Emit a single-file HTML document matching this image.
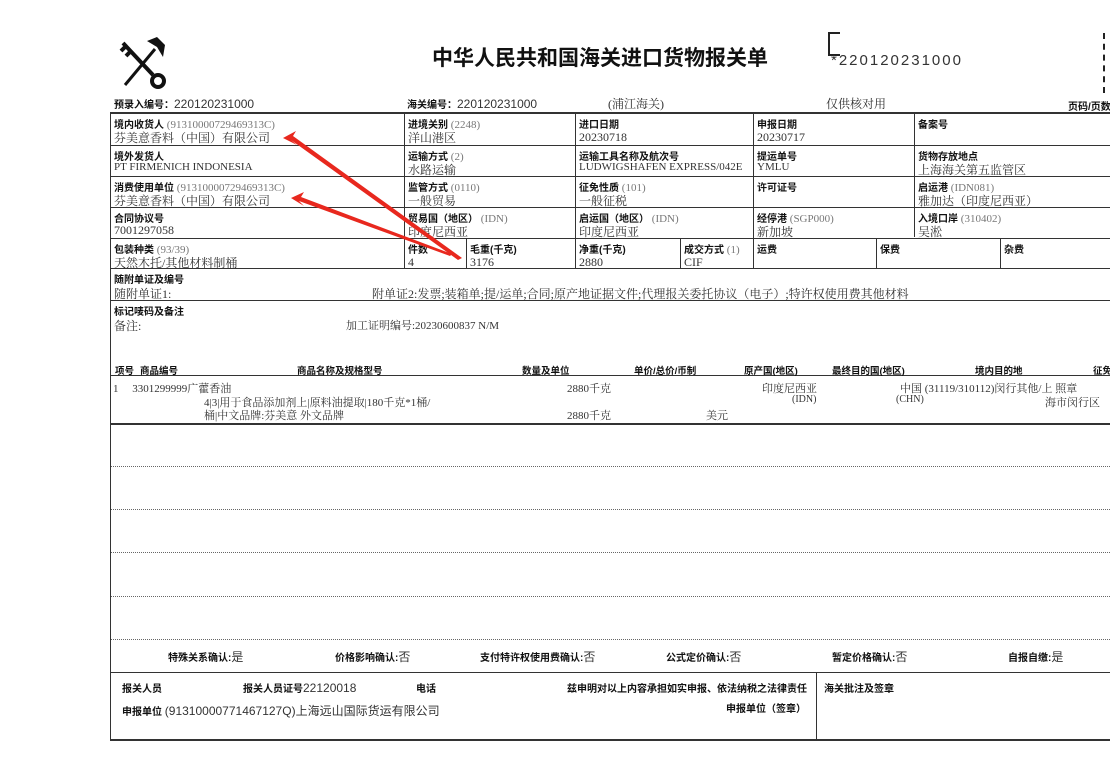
<!DOCTYPE html>
<html><head><meta charset="utf-8"><style>
body{margin:0;background:#fff;width:1110px;height:766px;overflow:hidden;position:relative;font-family:"Liberation Serif","Noto Serif CJK SC",serif;color:#222}
.a{position:absolute;white-space:nowrap}
.b{font-family:"Liberation Sans","Noto Sans CJK SC",sans-serif;font-weight:bold;font-size:10px;color:#111}
.v{font-size:12px;color:#333}
.g{color:#777;font-weight:normal;font-family:"Liberation Serif","Noto Serif CJK SC",serif;font-size:11px}
.h{position:absolute;height:0;border-top:1.5px solid #333}
.d{position:absolute;height:0;border-top:1px dotted #666}
.vl{position:absolute;width:0;border-left:1.5px solid #333}
</style></head><body>
<svg class="a" style="left:113px;top:33px" width="60" height="60" viewBox="0 0 60 60">
<g stroke="#111" fill="none" stroke-width="4">
<line x1="10" y1="10" x2="40" y2="42"/><line x1="8" y1="18" x2="14" y2="12"/><line x1="13" y1="23" x2="18" y2="18"/>
<circle cx="45" cy="48" r="6"/>
<line x1="42" y1="16" x2="12" y2="52" stroke-width="3"/>
</g>
<path d="M34 8 L44 4 L52 12 L50 24 L44 14 Z" fill="#111"/>
</svg>
<div class="a" style="left:432px;top:42px;font-size:21px;font-weight:bold;font-family:'Liberation Sans','Noto Sans CJK SC',sans-serif;color:#111">中华人民共和国海关进口货物报关单</div>
<div class="a" style="left:828px;top:32px;width:10px;height:20px;border:2px solid #222;border-right:none"></div>
<div class="a" style="left:831px;top:52px;font-size:15px;letter-spacing:2px;font-family:'Liberation Sans',sans-serif;color:#333">*220120231000</div>
<div class="a" style="left:1103px;top:33px;width:3px;height:60px;border-left:2px dashed #222"></div>

<div class="a b" style="left:114px;top:96px">预录入编号：<span class="v" style="font-weight:normal">220120231000</span></div>
<div class="a b" style="left:407px;top:96px">海关编号：<span class="v" style="font-weight:normal">220120231000</span></div>
<div class="a v" style="left:608px;top:95px">(浦江海关)</div>
<div class="a v" style="left:826px;top:95px">仅供核对用</div>
<div class="a b" style="left:1068px;top:98px">页码/页数</div>

<div class="h" style="left:110px;top:112px;width:1000px;border-top-width:2px"></div>
<div class="h" style="left:110px;top:145px;width:1000px"></div>
<div class="h" style="left:110px;top:176px;width:1000px"></div>
<div class="h" style="left:110px;top:207px;width:1000px"></div>
<div class="h" style="left:110px;top:238px;width:1000px"></div>
<div class="h" style="left:110px;top:268px;width:1000px"></div>
<div class="h" style="left:110px;top:300px;width:1000px"></div>
<div class="h" style="left:110px;top:375px;width:1000px"></div>
<div class="h" style="left:110px;top:423px;width:1000px;border-top-width:2px"></div>
<div class="d" style="left:110px;top:466px;width:1000px"></div>
<div class="d" style="left:110px;top:509px;width:1000px"></div>
<div class="d" style="left:110px;top:552px;width:1000px"></div>
<div class="d" style="left:110px;top:596px;width:1000px"></div>
<div class="d" style="left:110px;top:639px;width:1000px"></div>
<div class="h" style="left:110px;top:672px;width:1000px"></div>
<div class="h" style="left:110px;top:739px;width:1000px;border-top-width:2px"></div>
<div class="vl" style="left:110px;top:112px;height:628px"></div>
<div class="vl" style="left:404px;top:112px;height:156px"></div>
<div class="vl" style="left:575px;top:112px;height:156px"></div>
<div class="vl" style="left:753px;top:112px;height:156px"></div>
<div class="vl" style="left:914px;top:112px;height:125px"></div>
<div class="vl" style="left:466px;top:238px;height:30px"></div>
<div class="vl" style="left:680px;top:238px;height:30px"></div>
<div class="vl" style="left:876px;top:238px;height:30px"></div>
<div class="vl" style="left:1000px;top:238px;height:30px"></div>
<div class="vl" style="left:816px;top:672px;height:67px"></div>

<div class="a b" style="left:114px;top:116px">境内收货人 <span class="g">(91310000729469313C)</span></div>
<div class="a v" style="left:114px;top:129px">芬美意香料（中国）有限公司</div>
<div class="a b" style="left:408px;top:116px">进境关别 <span class="g">(2248)</span></div>
<div class="a v" style="left:408px;top:129px">洋山港区</div>
<div class="a b" style="left:579px;top:116px">进口日期</div>
<div class="a v" style="left:579px;top:130px">20230718</div>
<div class="a b" style="left:757px;top:116px">申报日期</div>
<div class="a v" style="left:757px;top:130px">20230717</div>
<div class="a b" style="left:918px;top:116px">备案号</div>

<div class="a b" style="left:114px;top:148px">境外发货人</div>
<div class="a v" style="left:114px;top:161px;font-size:11px">PT FIRMENICH INDONESIA</div>
<div class="a b" style="left:408px;top:148px">运输方式 <span class="g">(2)</span></div>
<div class="a v" style="left:408px;top:161px">水路运输</div>
<div class="a b" style="left:579px;top:148px">运输工具名称及航次号</div>
<div class="a v" style="left:579px;top:161px;font-size:11px">LUDWIGSHAFEN EXPRESS/042E</div>
<div class="a b" style="left:757px;top:148px">提运单号</div>
<div class="a v" style="left:757px;top:161px;font-size:11px">YMLU</div>
<div class="a b" style="left:918px;top:148px">货物存放地点</div>
<div class="a v" style="left:918px;top:161px">上海海关第五监管区</div>

<div class="a b" style="left:114px;top:179px">消费使用单位 <span class="g">(91310000729469313C)</span></div>
<div class="a v" style="left:114px;top:192px">芬美意香料（中国）有限公司</div>
<div class="a b" style="left:408px;top:179px">监管方式 <span class="g">(0110)</span></div>
<div class="a v" style="left:408px;top:192px">一般贸易</div>
<div class="a b" style="left:579px;top:179px">征免性质 <span class="g">(101)</span></div>
<div class="a v" style="left:579px;top:192px">一般征税</div>
<div class="a b" style="left:757px;top:179px">许可证号</div>
<div class="a b" style="left:918px;top:179px">启运港 <span class="g">(IDN081)</span></div>
<div class="a v" style="left:918px;top:192px">雅加达（印度尼西亚）</div>

<div class="a b" style="left:114px;top:210px">合同协议号</div>
<div class="a v" style="left:114px;top:223px">7001297058</div>
<div class="a b" style="left:408px;top:210px">贸易国（地区） <span class="g">(IDN)</span></div>
<div class="a v" style="left:408px;top:223px">印度尼西亚</div>
<div class="a b" style="left:579px;top:210px">启运国（地区） <span class="g">(IDN)</span></div>
<div class="a v" style="left:579px;top:223px">印度尼西亚</div>
<div class="a b" style="left:757px;top:210px">经停港 <span class="g">(SGP000)</span></div>
<div class="a v" style="left:757px;top:223px">新加坡</div>
<div class="a b" style="left:918px;top:210px">入境口岸 <span class="g">(310402)</span></div>
<div class="a v" style="left:918px;top:223px">吴淞</div>

<div class="a b" style="left:114px;top:241px">包装种类 <span class="g">(93/39)</span></div>
<div class="a v" style="left:114px;top:254px">天然木托/其他材料制桶</div>
<div class="a b" style="left:408px;top:241px">件数</div>
<div class="a v" style="left:408px;top:255px">4</div>
<div class="a b" style="left:470px;top:241px">毛重(千克)</div>
<div class="a v" style="left:470px;top:255px">3176</div>
<div class="a b" style="left:579px;top:241px">净重(千克)</div>
<div class="a v" style="left:579px;top:255px">2880</div>
<div class="a b" style="left:684px;top:241px">成交方式 <span class="g">(1)</span></div>
<div class="a v" style="left:684px;top:255px">CIF</div>
<div class="a b" style="left:757px;top:241px">运费</div>
<div class="a b" style="left:880px;top:241px">保费</div>
<div class="a b" style="left:1004px;top:241px">杂费</div>

<div class="a b" style="left:114px;top:271px">随附单证及编号</div>
<div class="a v" style="left:114px;top:285px">随附单证1:</div>
<div class="a v" style="left:372px;top:285px">附单证2:发票;装箱单;提/运单;合同;原产地证据文件;代理报关委托协议（电子）;特许权使用费其他材料</div>
<div class="a b" style="left:114px;top:303px">标记唛码及备注</div>
<div class="a v" style="left:114px;top:317px">备注:</div>
<div class="a v" style="left:346px;top:317px;font-size:11px">加工证明编号:20230600837 N/M</div>

<div class="a b" style="left:115px;top:363px;font-size:9.5px">项号</div>
<div class="a b" style="left:140px;top:363px;font-size:9.5px">商品编号</div>
<div class="a b" style="left:297px;top:363px;font-size:9.5px">商品名称及规格型号</div>
<div class="a b" style="left:522px;top:363px;font-size:9.5px">数量及单位</div>
<div class="a b" style="left:634px;top:363px;font-size:9.5px">单价/总价/币制</div>
<div class="a b" style="left:744px;top:363px;font-size:9.5px">原产国(地区)</div>
<div class="a b" style="left:832px;top:363px;font-size:9.5px">最终目的国(地区)</div>
<div class="a b" style="left:975px;top:363px;font-size:9.5px">境内目的地</div>
<div class="a b" style="left:1093px;top:363px;font-size:9.5px">征免</div>
<div class="a v" style="left:113px;top:380px;font-size:11px">1&nbsp;&nbsp;&nbsp;&nbsp;&nbsp;3301299999广藿香油</div>
<div class="a v" style="left:204px;top:394px;font-size:11px">4|3|用于食品添加剂上|原料油提取|180千克*1桶/</div>
<div class="a v" style="left:204px;top:407px;font-size:11px">桶|中文品牌:芬美意 外文品牌</div>
<div class="a v" style="left:567px;top:380px;font-size:11px">2880千克</div>
<div class="a v" style="left:567px;top:407px;font-size:11px">2880千克</div>
<div class="a v" style="left:706px;top:407px;font-size:11px">美元</div>
<div class="a v" style="left:762px;top:380px;font-size:11px">印度尼西亚</div>
<div class="a v" style="left:792px;top:394px;font-size:10px">(IDN)</div>
<div class="a v" style="left:900px;top:380px;font-size:11px">中国 (31119/310112)闵行其他/上 照章</div>
<div class="a v" style="left:896px;top:394px;font-size:10px">(CHN)</div>
<div class="a v" style="left:1045px;top:394px;font-size:11px">海市闵行区</div>

<div class="a b" style="left:168px;top:648px">特殊关系确认:<span class="v" style="font-weight:normal">是</span></div>
<div class="a b" style="left:335px;top:648px">价格影响确认:<span class="v" style="font-weight:normal">否</span></div>
<div class="a b" style="left:480px;top:648px">支付特许权使用费确认:<span class="v" style="font-weight:normal">否</span></div>
<div class="a b" style="left:666px;top:648px">公式定价确认:<span class="v" style="font-weight:normal">否</span></div>
<div class="a b" style="left:832px;top:648px">暂定价格确认:<span class="v" style="font-weight:normal">否</span></div>
<div class="a b" style="left:1008px;top:648px">自报自缴:<span class="v" style="font-weight:normal">是</span></div>

<div class="a b" style="left:122px;top:680px">报关人员</div>
<div class="a b" style="left:243px;top:680px">报关人员证号<span class="v" style="font-weight:normal">22120018</span></div>
<div class="a b" style="left:416px;top:680px">电话</div>
<div class="a b" style="left:567px;top:680px">兹申明对以上内容承担如实申报、依法纳税之法律责任</div>
<div class="a b" style="left:824px;top:680px">海关批注及签章</div>
<div class="a b" style="left:122px;top:702px">申报单位 <span class="v" style="font-weight:normal">(91310000771467127Q)上海远山国际货运有限公司</span></div>
<div class="a b" style="left:726px;top:700px">申报单位（签章）</div>

<svg class="a" style="left:0;top:0" width="1110" height="766">
<polygon points="283,138 296,131 293,136 462,258 458,260 291,140 297,145" fill="#e8281e"/>
<polygon points="291,198 304,192 301,197 452,254 450,256 299,201 304,206" fill="#e8281e"/>
</svg>
</body></html>
